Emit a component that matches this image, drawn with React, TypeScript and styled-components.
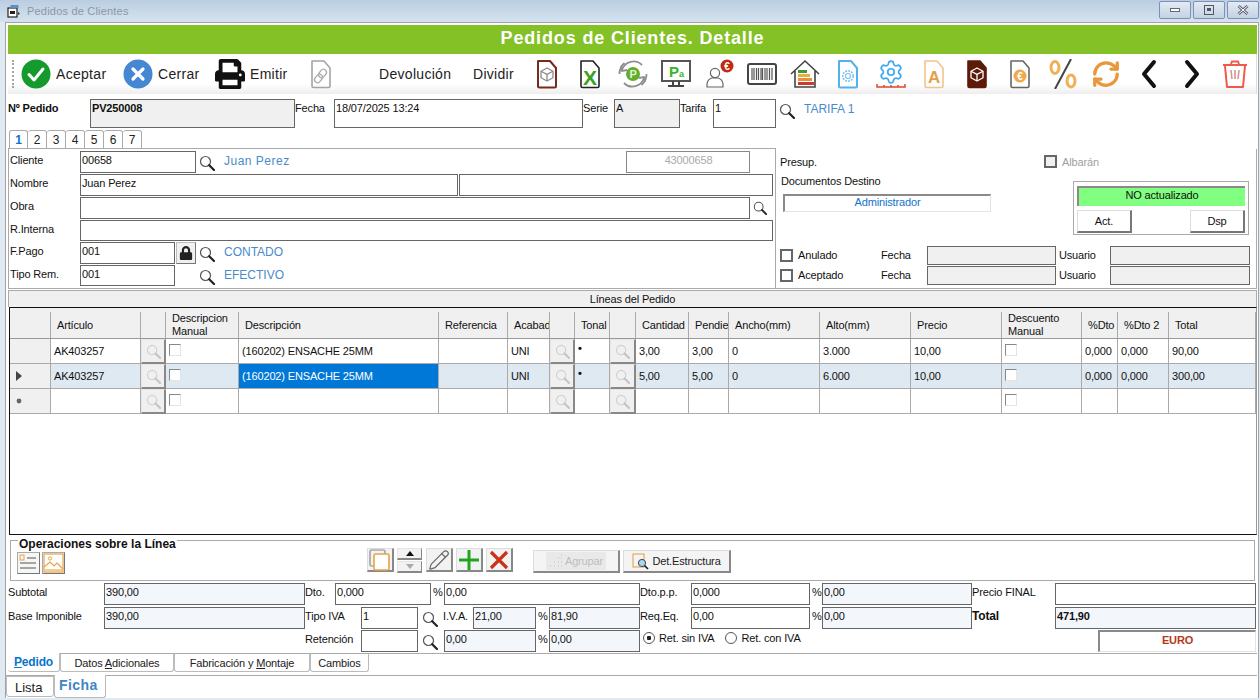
import React from 'react'
import styled, { createGlobalStyle } from 'styled-components'
import { Pencil, RefreshCw, Settings } from 'lucide-react'
import { FaLock, FaPrint } from 'react-icons/fa'

const GlobalStyle = createGlobalStyle`
  html, body {
    margin: 0;
    padding: 0;
    background: #dfeaf3;
  }
  body {
    font-family: "Liberation Sans", Arial, sans-serif;
    font-size: 11px;
    letter-spacing: -0.15px;
    color: #111;
    overflow: hidden;
  }
  * {
    box-sizing: border-box;
  }
`

const Page = styled.div`
  width: 1260px;
  height: 700px;
  display: flex;
  flex-direction: column;
  background: #dfeaf3;
`

const TitleBar = styled.div`
  height: 22px;
  display: flex;
  align-items: center;
  padding-left: 7px;
  background: linear-gradient(#bacde0, #d5e3f0);
  color: #8c97a3;
  font-size: 11px;
`

const TitleText = styled.span`
  margin-left: 6px;
  letter-spacing: 0.2px;
`

const WindowButtons = styled.div`
  margin-left: auto;
  margin-right: 1px;
  display: flex;
  gap: 2px;
  align-self: flex-start;
  padding-top: 1px;
`

const WindowButton = styled.div`
  width: 32px;
  height: 18px;
  border: 1px solid #7f8fb5;
  border-radius: 2px;
  background: linear-gradient(#e3ebf4, #c3d2e3);
  display: flex;
  align-items: center;
  justify-content: center;
  color: #555;
`

const Frame = styled.div`
  width: 1254px;
  height: 676px;
  margin-left: 5px;
  padding: 2px 1px 0 2px;
  border: 1px solid #a3a3a3;
  border-bottom: none;
  background: #fff;
`

const GreenBar = styled.div`
  height: 29px;
  background: #84c126;
  color: #fff;
  font-size: 18px;
  font-weight: bold;
  letter-spacing: 0.85px;
  text-align: center;
  line-height: 27px;
`

const Toolbar = styled.div`
  height: 40px;
  display: flex;
  align-items: center;
  background: linear-gradient(#ffffff 75%, #eeeeee);
  border-right: 1px solid #ddd;
`

const Grip = styled.div`
  width: 2px;
  height: 28px;
  margin-left: 4px;
  border-left: 2px dotted #a5a5a5;
`

const ToolAction = styled.div<{ $ml: number }>`
  display: flex;
  align-items: center;
  gap: 5px;
  margin-left: ${(p) => p.$ml}px;
`

const ToolText = styled.span<{ $w: number; $ml?: number }>`
  width: ${(p) => p.$w}px;
  margin-left: ${(p) => p.$ml ?? 0}px;
  font-size: 14px;
  letter-spacing: 0.3px;
  color: #222;
  white-space: nowrap;
`

const IconStrip = styled.div`
  margin-left: auto;
  display: flex;
`

const IconSlot = styled.div`
  width: 43px;
  height: 40px;
  display: flex;
  align-items: center;
  justify-content: center;
`

const HeadRow = styled.div`
  height: 29px;
  margin-top: 5px;
  display: flex;
  align-items: flex-start;
`

const Label = styled.span<{ $w: number; $bold?: boolean; $large?: boolean }>`
  flex: none;
  width: ${(p) => p.$w}px;
  padding-top: 2px;
  font-size: ${(p) => (p.$large ? 12 : 11)}px;
  font-weight: ${(p) => (p.$bold ? 'bold' : 'normal')};
  line-height: 14px;
  white-space: nowrap;
`

const Field = styled.div<{ $w: number; $h?: number; $fill?: string; $bold?: boolean; $ml?: number }>`
  flex: none;
  width: ${(p) => p.$w}px;
  height: ${(p) => p.$h ?? 22}px;
  margin-left: ${(p) => p.$ml ?? 0}px;
  padding-left: 1px;
  border: 1px solid #666;
  background: ${(p) => p.$fill ?? '#fff'};
  font-weight: ${(p) => (p.$bold ? 'bold' : 'normal')};
  line-height: 17px;
  white-space: nowrap;
  overflow: hidden;
`

const CodeField = styled(Field)`
  margin-left: auto;
  margin-right: 25px;
  border-color: #888;
  color: #aaa;
  text-align: center;
`

const BlueText = styled.span<{ $ml: number; $spaced?: boolean }>`
  margin-left: ${(p) => p.$ml}px;
  padding-top: 3px;
  color: #4a8bcb;
  font-size: 12px;
  line-height: 14px;
  letter-spacing: ${(p) => (p.$spaced ? '0.5px' : '0')};
`

const SearchSlot = styled.span<{ $ml: number; $w?: number }>`
  flex: none;
  width: ${(p) => p.$w ?? 16}px;
  margin-left: ${(p) => p.$ml}px;
  padding-top: 4px;
  display: flex;
`

const PageTabs = styled.div`
  height: 20px;
  margin-top: 1px;
  padding-left: 1px;
  display: flex;
  align-items: flex-end;
`

const PageTab = styled.div<{ $active?: boolean }>`
  width: 19px;
  height: 19px;
  border: 1px solid #aaa;
  border-bottom: ${(p) => (p.$active ? 'none' : '1px solid #aaa')};
  border-left: ${(p) => (p.$active ? '1px solid #aaa' : 'none')};
  border-radius: 3px 3px 0 0;
  text-align: center;
  font-size: 12px;
  line-height: 18px;
  font-weight: ${(p) => (p.$active ? 'bold' : 'normal')};
  color: ${(p) => (p.$active ? '#0a74c8' : '#222')};
`

const Panels = styled.div`
  height: 140px;
  display: flex;
`

const LeftPanel = styled.div`
  width: 768px;
  padding: 3px 0 0 1px;
  border: 1px solid #aaa;
  border-top: none;
  margin-top: -1px;
  height: 141px;
  box-shadow: inset 0 1px 0 #aaa;
`

const FormRow = styled.div<{ $h?: number }>`
  height: ${(p) => p.$h ?? 23}px;
  display: flex;
  align-items: flex-start;
`

const LockButton = styled.div`
  flex: none;
  width: 20px;
  height: 22px;
  margin-left: 1px;
  border: 1px solid #bbb;
  border-right-color: #777;
  border-bottom-color: #777;
  background: #f0f0f0;
  display: flex;
  align-items: center;
  justify-content: center;
  color: #222;
`

const RightPanel = styled.div`
  flex: 1;
  padding-left: 4px;
  border-right: 1px solid #aaa;
  border-bottom: 1px solid #aaa;
  display: flex;
  flex-direction: column;
`

const PresupRow = styled.div`
  height: 25px;
  display: flex;
  align-items: center;
`

const PresupLabel = styled.span`
  width: 264px;
  padding-top: 1px;
`

const CheckLabel = styled.label<{ $w?: number; $muted?: boolean }>`
  flex: none;
  width: ${(p) => (p.$w ? `${p.$w}px` : 'auto')};
  display: flex;
  align-items: center;
  gap: 5px;
  color: ${(p) => (p.$muted ? '#a0a0a0' : '#111')};
`

const SquareCheck = styled.span<{ $fill?: string }>`
  width: 13px;
  height: 13px;
  border: 2px solid #666;
  background: ${(p) => p.$fill ?? '#fff'};
`

const MiddleBlock = styled.div`
  height: 71px;
  padding-right: 7px;
  display: flex;
  justify-content: space-between;
`

const DocsColumn = styled.div`
  margin-left: 1px;
  display: flex;
  flex-direction: column;
`

const DocsTitle = styled.span`
  line-height: 14px;
`

const SunkenBox = styled.div<{ $w: number; $color: string; $bold?: boolean; $ml?: number; $mt?: number }>`
  flex: none;
  width: ${(p) => p.$w}px;
  height: ${(p) => (p.$bold ? 22 : 18)}px;
  margin-left: ${(p) => p.$ml ?? 0}px;
  margin-top: ${(p) => p.$mt ?? 0}px;
  border: 1px solid #e3e3e3;
  border-top: 2px solid #8a8a8a;
  border-left: 2px solid #8a8a8a;
  color: ${(p) => p.$color};
  font-weight: ${(p) => (p.$bold ? 'bold' : 'normal')};
  text-align: center;
  line-height: ${(p) => (p.$bold ? 16 : 13)}px;
`

const StatusBox = styled.div`
  width: 176px;
  height: 54px;
  margin-top: 7px;
  padding: 4px 3px;
  border: 1px solid #aaa;
`

const StatusBanner = styled.div`
  height: 20px;
  border-top: 2px solid #8a8a8a;
  border-left: 2px solid #8a8a8a;
  background: #80ff80;
  text-align: center;
  line-height: 15px;
`

const StatusButtons = styled.div`
  margin-top: 4px;
  display: flex;
  justify-content: space-between;
`

const StatusButton = styled.div`
  width: 55px;
  height: 23px;
  border: 1px solid #ddd;
  border-right: 2px solid #777;
  border-bottom: 2px solid #777;
  background: #fff;
  text-align: center;
  line-height: 20px;
`

const AuditRow = styled.div`
  height: 20px;
  display: flex;
  align-items: center;
`

const AuditLabel = styled.span<{ $w: number }>`
  width: ${(p) => p.$w}px;
  line-height: 19px;
`

const GridTitle = styled.div`
  height: 17px;
  margin-top: 1px;
  border: 1px solid #aaa;
  border-bottom: none;
  background: #f0f0f0;
  text-align: center;
  line-height: 16px;
`

const Grid = styled.div`
  height: 228px;
  margin-left: 1px;
  border: 1px solid #111;
  border-right-color: #999;
  background: #fff;
`

const COLUMNS = '41px 90px 25px 73px 200px 69px 42px 25px 35px 26px 53px 40px 91px 91px 91px 80px 36px 51px 87px'

const HeaderRow = styled.div`
  height: 31px;
  padding-top: 4px;
  display: grid;
  grid-template-columns: ${COLUMNS};
  background: #f0f0f0;
  border-bottom: 1px solid #999;
`

const HeaderCell = styled.div`
  padding-left: 6px;
  display: flex;
  align-items: center;
  border-right: 1px solid #aaa;
  line-height: 13px;
  overflow: hidden;
  white-space: pre;
`

const DataRow = styled.div<{ $selected?: boolean }>`
  height: 25px;
  display: grid;
  grid-template-columns: ${COLUMNS};
  background: ${(p) => (p.$selected ? '#dfe9f1' : '#fff')};
`

const Cell = styled.div<{ $highlight?: boolean }>`
  padding-left: 3px;
  display: flex;
  align-items: center;
  border-right: 1px solid #aaa;
  border-bottom: 1px solid #aaa;
  background: ${(p) => (p.$highlight ? '#0078d7' : 'transparent')};
  color: ${(p) => (p.$highlight ? '#fff' : '#111')};
  white-space: nowrap;
  overflow: hidden;
`

const RowHead = styled(Cell)`
  padding-left: 0;
  justify-content: flex-start;
  background: #f0f0f0;
`

const RowMarker = styled.span`
  margin-left: 6px;
  width: 6px;
  display: flex;
  justify-content: center;
`

const CheckCell = styled(Cell)`
  align-items: flex-start;
  padding-top: 5px;
`

const GridCheck = styled.span`
  width: 12px;
  height: 12px;
  border: 1px solid #e4e4e4;
  border-top-color: #888;
  border-left-color: #888;
  background: #fff;
`

const DotCell = styled(Cell)`
  align-items: flex-start;
  padding-top: 3px;
  font-size: 11px;
  font-weight: bold;
`

const ButtonCell = styled.div`
  border-right: 2px solid #888;
  border-bottom: 2px solid #888;
  border-top: 1px solid #e6e6e6;
  border-left: 1px solid #e6e6e6;
  background: #f0f0f0;
  display: flex;
  align-items: center;
  justify-content: center;
`

const GroupBox = styled.div`
  position: relative;
  height: 41px;
  margin: 5px 2px 0;
  padding: 7px 0 0 6px;
  border: 1px solid #aaa;
  display: flex;
  align-items: flex-start;
`

const GroupTitle = styled.span`
  position: absolute;
  top: -3px;
  left: 7px;
  padding: 0 1px;
  background: #fff;
  font-size: 12px;
  font-weight: bold;
  letter-spacing: 0;
  line-height: 13px;
`

const PictureButtons = styled.div`
  width: 350px;
  margin-top: 4px;
  display: flex;
  gap: 2px;
`

const FlatButton = styled.div`
  width: 23px;
  height: 22px;
  border: 1px solid #aaa;
  border-right-color: #777;
  border-bottom-color: #777;
  background: #f6f6f6;
  display: flex;
  align-items: center;
  justify-content: center;
`

const OpButton = styled.div`
  flex: none;
  width: 27px;
  height: 24px;
  margin-right: 3px;
  border: 1px solid #ddd;
  border-right: 2px solid #888;
  border-bottom: 2px solid #888;
  background: #f2f2f2;
  display: flex;
  align-items: center;
  justify-content: center;
`

const SpinColumn = styled.div`
  flex: none;
  width: 25px;
  margin-right: 4px;
  display: flex;
  flex-direction: column;
  gap: 1px;
`

const SpinButton = styled.div`
  height: 12px;
  border-right: 1px solid #888;
  border-bottom: 2px solid #888;
  border-top: 1px solid #e5e5e5;
  border-left: 1px solid #e5e5e5;
  background: #f2f2f2;
  display: flex;
  align-items: center;
  justify-content: center;
`

const TextButton = styled.div<{ $w: number; $ml: number }>`
  flex: none;
  width: ${(p) => p.$w}px;
  height: 23px;
  margin-top: 2px;
  margin-left: ${(p) => p.$ml}px;
  border: 1px solid #ddd;
  border-right: 2px solid #888;
  border-bottom: 2px solid #888;
  background: #f4f4f4;
  display: flex;
  align-items: center;
  justify-content: center;
  gap: 3px;
  color: #222;
`

const DisabledCaption = styled.span`
  display: flex;
  align-items: center;
  gap: 2px;
  padding: 2px 3px;
  background: #e9e9e9;
  color: #bdbdbd;
`

const Totals = styled.div`
  margin-top: 2px;
`

const Pct = styled.span<{ $w: number }>`
  flex: none;
  width: ${(p) => p.$w}px;
  padding: 2px 0 0 2px;
  line-height: 14px;
`

const RadioGroup = styled.div`
  width: 458px;
  padding: 2px 0 0 3px;
  display: flex;
  gap: 11px;
`

const RadioOption = styled.label`
  display: flex;
  align-items: center;
  gap: 4px;
`

const Radio = styled.span<{ $on?: boolean }>`
  width: 12px;
  height: 12px;
  border: 1.5px solid #555;
  border-radius: 50%;
  background: ${(p) => (p.$on ? 'radial-gradient(circle, #222 0 2px, #fff 2.5px)' : '#fff')};
`

const DocTabs = styled.div`
  height: 22px;
  border-top: 1px solid #aaa;
  display: flex;
  align-items: flex-start;
`

const DocTab = styled.div<{ $w: number; $active?: boolean }>`
  width: ${(p) => p.$w}px;
  height: 19px;
  margin-top: -1px;
  border: 1px solid #bbb;
  border-left: ${(p) => (p.$active ? 'none' : '1px solid #bbb')};
  border-top: ${(p) => (p.$active ? 'none' : '1px solid #aaa')};
  border-radius: 0 0 3px 3px;
  text-align: center;
  line-height: 18px;
  background: #fff;
  font-size: ${(p) => (p.$active ? 12 : 11)}px;
  font-weight: ${(p) => (p.$active ? 'bold' : 'normal')};
  color: ${(p) => (p.$active ? '#0a74c8' : '#222')};

  u {
    text-decoration: underline;
  }
`

const ViewTabs = styled.div`
  margin-left: -2px;
  height: 23px;
  border-top: 1px solid #aaa;
  display: flex;
  align-items: flex-start;
`

const ViewTab = styled.div<{ $w: number; $active?: boolean }>`
  width: ${(p) => p.$w}px;
  height: ${(p) => (p.$active ? 23 : 21)}px;
  margin-top: ${(p) => (p.$active ? -1 : 0)}px;
  border: 1px solid #bbb;
  border-top: ${(p) => (p.$active ? 'none' : '1px solid #bbb')};
  border-radius: 0 0 3px 3px;
  background: #fff;
  padding-left: ${(p) => (p.$active ? 4 : 8)}px;
  font-size: ${(p) => (p.$active ? 14 : 13)}px;
  line-height: 21px;
  font-weight: ${(p) => (p.$active ? 'bold' : 'normal')};
  color: ${(p) => (p.$active ? '#3f86c6' : '#222')};
  letter-spacing: ${(p) => (p.$active ? '0.4px' : '0')};
`

const Magnifier = ({ size = 16, pale = false }: { size?: number; pale?: boolean }) => (
  <svg width={size} height={size} viewBox="0 0 16 16">
    <circle cx="6.5" cy="6.5" r="5" fill="none" stroke={pale ? '#d0d0d0' : '#555'} strokeWidth="1.2" />
    <line x1="10.2" y1="10.2" x2="15" y2="15" stroke={pale ? '#c4c4c4' : '#222'} strokeWidth="2.2" strokeLinecap="round" />
  </svg>
)

const DocShape = ({ stroke, fill = 'none', width = 1.6 }: { stroke: string; fill?: string; width?: number }) => (
  <path d="M6 2h12l6 7v18a1.5 1.5 0 0 1-1.5 1.5h-15A1.5 1.5 0 0 1 6 27z" fill={fill} stroke={stroke} strokeWidth={width} strokeLinejoin="round" />
)

const Cube = ({ stroke }: { stroke: string }) => (
  <g fill="none" stroke={stroke} strokeWidth="1.3" strokeLinejoin="round">
    <path d="M15 9l6 3.2v6.6L15 22l-6-3.2v-6.6z" />
    <path d="M9 12.2l6 3.2 6-3.2M15 15.4V22" />
  </g>
)

const IconText = styled.text<{ $size: number; $color: string }>`
  font-family: "Liberation Sans", Arial, sans-serif;
  font-size: ${(p) => p.$size}px;
  font-weight: bold;
  fill: ${(p) => p.$color};
  text-anchor: middle;
`

const Icon30 = ({ children }: { children: React.ReactNode }) => (
  <svg width="30" height="30" viewBox="0 0 30 30">
    {children}
  </svg>
)

const CheckIcon = () => (
  <Icon30>
    <circle cx="15" cy="15" r="14.5" fill="#159a2d" />
    <path d="M8 15.5l5 5.5 9-11" fill="none" stroke="#fff" strokeWidth="3" strokeLinecap="round" strokeLinejoin="round" />
  </Icon30>
)

const CloseIcon = () => (
  <Icon30>
    <circle cx="15" cy="15" r="14.5" fill="#4587d2" />
    <path d="M10 10l10 10M20 10L10 20" fill="none" stroke="#fff" strokeWidth="3.2" strokeLinecap="round" />
  </Icon30>
)

const LinkDocIcon = () => (
  <Icon30>
    <DocShape stroke="#a8a3a3" />
    <g fill="none" stroke="#b0abab" strokeWidth="1.3">
      <rect x="13.5" y="10" width="6" height="9" rx="3" transform="rotate(40 16.5 14.5)" />
      <rect x="9.5" y="15" width="6" height="9" rx="3" transform="rotate(40 12.5 19.5)" />
    </g>
  </Icon30>
)

const BoxDocIcon = () => (
  <Icon30>
    <DocShape stroke="#7a2a1c" width={2} />
    <Cube stroke="#8d8d8d" />
  </Icon30>
)

const ExcelIcon = () => (
  <Icon30>
    <DocShape stroke="#222" />
    <IconText x="15" y="26" $size={21} $color="#35a31b">X</IconText>
  </Icon30>
)

const RefreshPIcon = () => (
  <Icon30>
    <g fill="none" stroke="#8f8f8f" strokeWidth="1.8">
      <path d="M4 11a12 12 0 0 1 20-5" />
      <path d="M3 7l1 5 5-1" />
      <path d="M26 19a12 12 0 0 1-20 5" />
      <path d="M27 23l-1-5-5 1" />
      <path d="M1.5 15a14 14 0 0 1 5-11M28.5 15a14 14 0 0 1-5 11" />
    </g>
    <circle cx="15" cy="15" r="7" fill="#62ad2e" />
    <IconText x="15" y="19" $size={11} $color="#dff3cf">P</IconText>
  </Icon30>
)

const MonitorIcon = () => (
  <Icon30>
    <rect x="1" y="2" width="28" height="20" fill="#fff" stroke="#555" strokeWidth="2" />
    <IconText x="13" y="18" $size={15} $color="#38b52a">P</IconText>
    <IconText x="20.5" y="18" $size={9} $color="#38b52a">a</IconText>
    <path d="M12 22v4M18 22v4M7 27h16" stroke="#444" strokeWidth="2" fill="none" />
  </Icon30>
)

const PersonEuroIcon = () => (
  <Icon30>
    <circle cx="11" cy="14" r="4.6" fill="none" stroke="#666" strokeWidth="1.2" />
    <path d="M3 28v-3a7 7 0 0 1 5-6h6a7 7 0 0 1 5 6v3z" fill="none" stroke="#666" strokeWidth="1.2" />
    <circle cx="23" cy="7" r="6.5" fill="#c02a12" />
    <IconText x="23" y="10.5" $size={10} $color="#fff">€</IconText>
  </Icon30>
)

const BarcodeIcon = () => (
  <Icon30>
    <rect x="1" y="5" width="28" height="20" rx="2" fill="none" stroke="#444" strokeWidth="2" />
    <path
      d="M5 9v12M7 9v12M9.5 9v12M11.5 9v12M14 9v12M15.5 9v12M18 9v12M20 9v12M22.5 9v12M25 9v12"
      stroke="#555"
      strokeWidth="1.2"
    />
  </Icon30>
)

const HouseIcon = () => (
  <Icon30>
    <path d="M1 15L15 2l14 13M5 12v16h20V12" fill="none" stroke="#444" strokeWidth="1.6" />
    <rect x="8" y="11" width="9" height="3" fill="#3f9a3c" />
    <rect x="8" y="15" width="12" height="3" fill="#e8b13a" />
    <rect x="8" y="19" width="14" height="3" fill="#e8913a" />
    <rect x="8" y="23" width="16" height="3" fill="#cf3b2b" />
  </Icon30>
)

const GearDocIcon = () => (
  <Icon30>
    <DocShape stroke="#55b1ee" width={2} />
    <circle cx="15" cy="17" r="5.2" fill="none" stroke="#7cc3f0" strokeWidth="1.6" strokeDasharray="2 1" />
    <circle cx="15" cy="17" r="2.5" fill="none" stroke="#7cc3f0" strokeWidth="1.2" />
  </Icon30>
)

const GearRulerIcon = () => (
  <svg width="30" height="30" viewBox="0 0 30 30">
    <svg x="2" y="0" width="26" height="26" viewBox="0 0 24 24">
      <Settings width="24" height="24" color="#3fa9ef" strokeWidth={1.6} />
    </svg>
    <path d="M1 25v3h28v-3M8 28v-2M15 28v-2M22 28v-2" fill="none" stroke="#dc4a2c" strokeWidth="1.5" />
  </svg>
)

const ADocIcon = () => (
  <Icon30>
    <DocShape stroke="#f0c48b" />
    <IconText x="15" y="24" $size={17} $color="#e6a048">A</IconText>
  </Icon30>
)

const DarkDocIcon = () => (
  <Icon30>
    <DocShape stroke="#5d1a06" fill="#5d1a06" />
    <Cube stroke="#fff" />
  </Icon30>
)

const EuroDocIcon = () => (
  <Icon30>
    <DocShape stroke="#666" />
    <circle cx="15" cy="17" r="6.5" fill="#f0a94e" />
    <IconText x="15" y="21" $size={10} $color="#fff">€</IconText>
  </Icon30>
)

const PercentIcon = () => (
  <Icon30>
    <ellipse cx="7" cy="8.5" rx="4" ry="6" fill="none" stroke="#f0b058" strokeWidth="3" />
    <ellipse cx="23" cy="22" rx="4" ry="6" fill="none" stroke="#f0b058" strokeWidth="3" />
    <path d="M23 0L7 30" stroke="#444" strokeWidth="2" />
  </Icon30>
)

const Chevron = ({ d }: { d: string }) => (
  <svg width="16" height="30" viewBox="0 0 16 30">
    <path d={d} fill="none" stroke="#111" strokeWidth="4" strokeLinecap="round" strokeLinejoin="round" />
  </svg>
)

const TrashIcon = () => (
  <Icon30>
    <path d="M3 6h24M11 5l1-2.5h6L19 5" fill="none" stroke="#ef5a4c" strokeWidth="2" />
    <path d="M5 7l2 21h16l2-21" fill="none" stroke="#ef5a4c" strokeWidth="2" strokeLinejoin="round" />
    <path d="M11 11l1 9M15 11v9M19 11l-1 9" fill="none" stroke="#d9958d" strokeWidth="1.6" />
  </Icon30>
)

const AppIcon = () => (
  <svg width="14" height="14" viewBox="0 0 14 14">
    <rect x="1" y="4" width="9" height="9" fill="#fff" stroke="#222" strokeWidth="1.2" />
    <rect x="3.5" y="1" width="8" height="3" fill="#5f8fbe" />
    <rect x="3" y="7" width="5" height="3" fill="#222" />
    <path d="M11 8l2 1.5-2 1.5z" fill="#333" />
  </svg>
)

const ListIcon = () => (
  <svg width="19" height="18" viewBox="0 0 19 18">
    <rect x="1" y="1" width="4" height="5" fill="none" stroke="#e8a34a" strokeWidth="1" />
    <path d="M8 4h9M1 9h16M1 14h16" stroke="#555" strokeWidth="1" />
  </svg>
)

const PictureIcon = () => (
  <svg width="21" height="20" viewBox="0 0 21 20">
    <rect x="1" y="1" width="19" height="18" fill="#fff" stroke="#e8a34a" strokeWidth="1.2" />
    <circle cx="7" cy="5.5" r="1.6" fill="none" stroke="#e8a34a" />
    <path d="M1 14l6-5 4 4 3-3 6 6" fill="none" stroke="#e8a34a" strokeWidth="1.2" />
    <rect x="2" y="16" width="17" height="2" fill="#f2cc90" />
  </svg>
)

const CopyIcon = () => (
  <svg width="22" height="22" viewBox="0 0 22 22">
    <rect x="1" y="1" width="15" height="16" rx="1.5" fill="none" stroke="#888" strokeWidth="1.2" />
    <rect x="5" y="5" width="15" height="16" rx="1.5" fill="#fff" stroke="#e8a34a" strokeWidth="1.6" />
  </svg>
)

const PlusIcon = () => (
  <svg width="22" height="22" viewBox="0 0 22 22">
    <path d="M11 1v20M1 11h20" stroke="#1fa51f" strokeWidth="3" />
  </svg>
)

const CrossIcon = () => (
  <svg width="20" height="20" viewBox="0 0 20 20">
    <path d="M2 2l16 16M18 2L2 18" stroke="#c8341a" strokeWidth="3.2" />
  </svg>
)

const DotsIcon = () => (
  <svg width="14" height="14" viewBox="0 0 14 14">
    <path d="M1 12h1M5 12h1M5 8h1M9 12h1M9 8h1M9 4h1M12 12h1M12 8h1M12 4h1M12 1h1" stroke="#c2c2c2" strokeWidth="1" />
  </svg>
)

const DetailIcon = () => (
  <svg width="17" height="17" viewBox="0 0 17 17">
    <rect x="1" y="1" width="11" height="13" fill="none" stroke="#e8a34a" strokeWidth="1.1" />
    <circle cx="10" cy="10" r="3.6" fill="#a7d8f2" stroke="#444" strokeWidth="1" />
    <path d="M12.6 12.6L16 16" stroke="#222" strokeWidth="1.6" />
  </svg>
)

const Triangle = ({ up = false, color = '#111' }: { up?: boolean; color?: string }) => (
  <svg width="8" height="5" viewBox="0 0 8 5">
    <path d={up ? 'M0 5L4 0l4 5z' : 'M0 0l4 5 4-5z'} fill={color} />
  </svg>
)

interface Line {
  articulo: string
  descripcion: string
  acabado: string
  tonal: string
  cantidad: string
  pendiente: string
  ancho: string
  alto: string
  precio: string
  dto: string
  dto2: string
  total: string
  marker: 'none' | 'current' | 'new'
}

const emptyLine: Line = {
  articulo: '',
  descripcion: '',
  acabado: '',
  tonal: '',
  cantidad: '',
  pendiente: '',
  ancho: '',
  alto: '',
  precio: '',
  dto: '',
  dto2: '',
  total: '',
  marker: 'new',
}

const lines: Line[] = [
  {
    articulo: 'AK403257',
    descripcion: '(160202) ENSACHE 25MM',
    acabado: 'UNI',
    tonal: '•',
    cantidad: '3,00',
    pendiente: '3,00',
    ancho: '0',
    alto: '3.000',
    precio: '10,00',
    dto: '0,000',
    dto2: '0,000',
    total: '90,00',
    marker: 'none',
  },
  {
    articulo: 'AK403257',
    descripcion: '(160202) ENSACHE 25MM',
    acabado: 'UNI',
    tonal: '•',
    cantidad: '5,00',
    pendiente: '5,00',
    ancho: '0',
    alto: '6.000',
    precio: '10,00',
    dto: '0,000',
    dto2: '0,000',
    total: '300,00',
    marker: 'current',
  },
  emptyLine,
]

// the narrow columns show their captions cut short, as in the grid of the program
const headers = [
  '',
  'Artículo',
  '',
  'Descripcion\nManual',
  'Descripción',
  'Referencia',
  'Acabad',
  '',
  'Tonal',
  '',
  'Cantidad',
  'Pendie',
  'Ancho(mm)',
  'Alto(mm)',
  'Precio',
  'Descuento\nManual',
  '%Dto',
  '%Dto 2',
  'Total',
]

const GridSearch = () => (
  <ButtonCell>
    <Magnifier size={15} pale />
  </ButtonCell>
)

const LineRow = ({ line }: { line: Line }) => {
  const selected = line.marker === 'current'
  return (
    <DataRow $selected={selected}>
      <RowHead>
        <RowMarker>
          {line.marker === 'current' && (
            <svg width="6" height="10" viewBox="0 0 6 10">
              <path d="M0 0l6 5-6 5z" fill="#444" />
            </svg>
          )}
          {line.marker === 'new' && (
            <svg width="6" height="6" viewBox="0 0 6 6">
              <circle cx="3" cy="3" r="2.4" fill="#666" />
            </svg>
          )}
        </RowMarker>
      </RowHead>
      <Cell>{line.articulo}</Cell>
      <GridSearch />
      <CheckCell>
        <GridCheck />
      </CheckCell>
      <Cell $highlight={selected}>{line.descripcion}</Cell>
      <Cell />
      <Cell>{line.acabado}</Cell>
      <GridSearch />
      <DotCell>{line.tonal}</DotCell>
      <GridSearch />
      <Cell>{line.cantidad}</Cell>
      <Cell>{line.pendiente}</Cell>
      <Cell>{line.ancho}</Cell>
      <Cell>{line.alto}</Cell>
      <Cell>{line.precio}</Cell>
      <CheckCell>
        <GridCheck />
      </CheckCell>
      <Cell>{line.dto}</Cell>
      <Cell>{line.dto2}</Cell>
      <Cell>{line.total}</Cell>
    </DataRow>
  )
}

const FILL = '#f3f6fb'
const GRAY = '#f0f0f0'

const App = () => {
  return (
    <Page>
      <GlobalStyle />
      <TitleBar>
        <AppIcon />
        <TitleText>Pedidos de Clientes</TitleText>
        <WindowButtons>
          <WindowButton>
            <svg width="10" height="4" viewBox="0 0 10 4">
              <rect x="0.5" y="0.5" width="9" height="3" fill="#fff" stroke="#667" />
            </svg>
          </WindowButton>
          <WindowButton>
            <svg width="10" height="10" viewBox="0 0 10 10">
              <rect x="0.5" y="0.5" width="9" height="9" fill="none" stroke="#556" />
              <rect x="3" y="3" width="4" height="3" fill="#556" />
            </svg>
          </WindowButton>
          <WindowButton>
            <svg width="12" height="10" viewBox="0 0 12 10">
              <path d="M1.5 1l9 8M10.5 1l-9 8" stroke="#667" strokeWidth="3" />
              <path d="M1.5 1l9 8M10.5 1l-9 8" stroke="#fff" strokeWidth="1" />
            </svg>
          </WindowButton>
        </WindowButtons>
      </TitleBar>
      <Frame>
        <GreenBar>Pedidos de Clientes. Detalle</GreenBar>
        <Toolbar>
          <Grip />
          <ToolAction $ml={7}>
            <CheckIcon />
            <ToolText $w={50}>Aceptar</ToolText>
          </ToolAction>
          <ToolAction $ml={17}>
            <CloseIcon />
            <ToolText $w={40}>Cerrar</ToolText>
          </ToolAction>
          <ToolAction $ml={17}>
            <FaPrint size={30} color="#111" />
            <ToolText $w={38}>Emitir</ToolText>
          </ToolAction>
          <ToolAction $ml={18}>
            <LinkDocIcon />
          </ToolAction>
          <ToolText $w={72} $ml={43}>
            Devolución
          </ToolText>
          <ToolText $w={44} $ml={22}>
            Dividir
          </ToolText>
          <IconStrip>
            <IconSlot><BoxDocIcon /></IconSlot>
            <IconSlot><ExcelIcon /></IconSlot>
            <IconSlot><RefreshPIcon /></IconSlot>
            <IconSlot><MonitorIcon /></IconSlot>
            <IconSlot><PersonEuroIcon /></IconSlot>
            <IconSlot><BarcodeIcon /></IconSlot>
            <IconSlot><HouseIcon /></IconSlot>
            <IconSlot><GearDocIcon /></IconSlot>
            <IconSlot><GearRulerIcon /></IconSlot>
            <IconSlot><ADocIcon /></IconSlot>
            <IconSlot><DarkDocIcon /></IconSlot>
            <IconSlot><EuroDocIcon /></IconSlot>
            <IconSlot><PercentIcon /></IconSlot>
            <IconSlot><RefreshCw size={30} color="#e8973a" strokeWidth={2.6} /></IconSlot>
            <IconSlot><Chevron d="M13 3L3 15l10 12" /></IconSlot>
            <IconSlot><Chevron d="M3 3l10 12L3 27" /></IconSlot>
            <IconSlot><TrashIcon /></IconSlot>
          </IconStrip>
        </Toolbar>

        <HeadRow>
          <Label $w={82} $bold>Nº Pedido</Label>
          <Field $w={205} $h={29} $fill={GRAY} $bold>PV250008</Field>
          <Label $w={39}>Fecha</Label>
          <Field $w={249} $h={29}>18/07/2025 13:24</Field>
          <Label $w={31}> Serie</Label>
          <Field $w={66} $h={29} $fill={GRAY}>A</Field>
          <Label $w={33}> Tarifa</Label>
          <Field $w={63} $h={29}>1</Field>
          <SearchSlot $ml={3}><Magnifier /></SearchSlot>
          <BlueText $ml={9}>TARIFA 1</BlueText>
        </HeadRow>

        <PageTabs>
          {[1, 2, 3, 4, 5, 6, 7].map((n) => (
            <PageTab key={n} $active={n === 1}>{n}</PageTab>
          ))}
        </PageTabs>

        <Panels>
          <LeftPanel>
            <FormRow>
              <Label $w={70}>Cliente</Label>
              <Field $w={116}>00658</Field>
              <SearchSlot $ml={3}><Magnifier /></SearchSlot>
              <BlueText $ml={9} $spaced>Juan Perez</BlueText>
              <CodeField $w={124}>43000658</CodeField>
            </FormRow>
            <FormRow>
              <Label $w={70}>Nombre</Label>
              <Field $w={378}>Juan Perez</Field>
              <Field $w={314} $ml={1} />
            </FormRow>
            <FormRow>
              <Label $w={70}>Obra</Label>
              <Field $w={670} />
              <SearchSlot $ml={3}><Magnifier size={14} /></SearchSlot>
            </FormRow>
            <FormRow $h={22}>
              <Label $w={70}>R.Interna</Label>
              <Field $w={693} $h={21} />
            </FormRow>
            <FormRow>
              <Label $w={70}>F.Pago</Label>
              <Field $w={95}>001</Field>
              <LockButton><FaLock size={14} /></LockButton>
              <SearchSlot $ml={3}><Magnifier /></SearchSlot>
              <BlueText $ml={9}>CONTADO</BlueText>
            </FormRow>
            <FormRow>
              <Label $w={70}>Tipo Rem.</Label>
              <Field $w={95} $h={21}>001</Field>
              <SearchSlot $ml={24}><Magnifier /></SearchSlot>
              <BlueText $ml={9}>EFECTIVO</BlueText>
            </FormRow>
          </LeftPanel>

          <RightPanel>
            <PresupRow>
              <PresupLabel>Presup.</PresupLabel>
              <CheckLabel $muted>
                <SquareCheck $fill={GRAY} />
                Albarán
              </CheckLabel>
            </PresupRow>
            <MiddleBlock>
              <DocsColumn>
                <DocsTitle>Documentos Destino</DocsTitle>
                <SunkenBox $w={208} $color="#1273cc" $ml={2} $mt={6}>Administrador</SunkenBox>
              </DocsColumn>
              <StatusBox>
                <StatusBanner>NO actualizado</StatusBanner>
                <StatusButtons>
                  <StatusButton>Act.</StatusButton>
                  <StatusButton>Dsp</StatusButton>
                </StatusButtons>
              </StatusBox>
            </MiddleBlock>
            <AuditRow>
              <CheckLabel $w={101}>
                <SquareCheck />
                Anulado
              </CheckLabel>
              <AuditLabel $w={46}>Fecha</AuditLabel>
              <Field $w={129} $h={19} $fill={GRAY} />
              <AuditLabel $w={54}>&nbsp;Usuario</AuditLabel>
              <Field $w={140} $h={19} $fill={GRAY} />
            </AuditRow>
            <AuditRow>
              <CheckLabel $w={101}>
                <SquareCheck />
                Aceptado
              </CheckLabel>
              <AuditLabel $w={46}>Fecha</AuditLabel>
              <Field $w={129} $h={19} $fill={GRAY} />
              <AuditLabel $w={54}>&nbsp;Usuario</AuditLabel>
              <Field $w={140} $h={19} $fill={GRAY} />
            </AuditRow>
          </RightPanel>
        </Panels>

        <GridTitle>Líneas del Pedido</GridTitle>
        <Grid>
          <HeaderRow>
            {headers.map((h, i) => (
              <HeaderCell key={i}>{h}</HeaderCell>
            ))}
          </HeaderRow>
          {lines.map((line, i) => (
            <LineRow key={i} line={line} />
          ))}
        </Grid>

        <GroupBox>
          <GroupTitle>Operaciones sobre la Línea</GroupTitle>
          <PictureButtons>
            <FlatButton><ListIcon /></FlatButton>
            <FlatButton><PictureIcon /></FlatButton>
          </PictureButtons>
          <OpButton><CopyIcon /></OpButton>
          <SpinColumn>
            <SpinButton><Triangle up /></SpinButton>
            <SpinButton><Triangle color="#aaa" /></SpinButton>
          </SpinColumn>
          <OpButton><Pencil size={22} color="#666" strokeWidth={1.3} /></OpButton>
          <OpButton><PlusIcon /></OpButton>
          <OpButton><CrossIcon /></OpButton>
          <TextButton $w={87} $ml={17}>
            <DisabledCaption>
              <DotsIcon />
              Agrupar
            </DisabledCaption>
          </TextButton>
          <TextButton $w={108} $ml={3}>
            <DetailIcon />
            Det.Estructura
          </TextButton>
        </GroupBox>

        <Totals>
          <FormRow $h={24}>
            <Label $w={96}>Subtotal</Label>
            <Field $w={201} $fill={FILL}>390,00</Field>
            <Label $w={30}>Dto.</Label>
            <Field $w={96}>0,000</Field>
            <Pct $w={13}>%</Pct>
            <Field $w={196}>0,00</Field>
            <Label $w={51}>Dto.p.p.</Label>
            <Field $w={119}>0,000</Field>
            <Pct $w={12}>%</Pct>
            <Field $w={150} $fill={FILL}>0,00</Field>
            <Label $w={83}>Precio FINAL</Label>
            <Field $w={201} />
          </FormRow>
          <FormRow>
            <Label $w={96}>Base Imponible</Label>
            <Field $w={201} $fill={FILL}>390,00</Field>
            <Label $w={56}>Tipo IVA</Label>
            <Field $w={57}>1</Field>
            <SearchSlot $ml={4} $w={21}><Magnifier /></SearchSlot>
            <Label $w={30}>I.V.A.</Label>
            <Field $w={63} $fill={FILL}>21,00</Field>
            <Pct $w={13}>%</Pct>
            <Field $w={91} $fill={FILL}>81,90</Field>
            <Label $w={51}>Req.Eq.</Label>
            <Field $w={119}>0,00</Field>
            <Pct $w={12}>%</Pct>
            <Field $w={150} $fill={FILL}>0,00</Field>
            <Label $w={83} $bold $large>Total</Label>
            <Field $w={201} $fill={FILL} $bold>471,90</Field>
          </FormRow>
          <FormRow>
            <Label $w={297} />
            <Label $w={56}>Retención</Label>
            <Field $w={57} />
            <SearchSlot $ml={4} $w={22}><Magnifier /></SearchSlot>
            <Field $w={92} $fill={FILL}>0,00</Field>
            <Pct $w={13}>%</Pct>
            <Field $w={91} $fill={FILL}>0,00</Field>
            <RadioGroup>
              <RadioOption>
                <Radio $on />
                Ret. sin IVA
              </RadioOption>
              <RadioOption>
                <Radio />
                Ret. con IVA
              </RadioOption>
            </RadioGroup>
            <SunkenBox $w={158} $color="#b5381a" $bold>EURO</SunkenBox>
          </FormRow>
        </Totals>

        <DocTabs>
          <DocTab $w={52} $active><u>P</u>edido</DocTab>
          <DocTab $w={114}>Datos <u>A</u>dicionales</DocTab>
          <DocTab $w={136}>Fabricación y <u>M</u>ontaje</DocTab>
          <DocTab $w={59}>Cambios</DocTab>
        </DocTabs>
        <ViewTabs>
          <ViewTab $w={48}>Lista</ViewTab>
          <ViewTab $w={52} $active>Ficha</ViewTab>
        </ViewTabs>
      </Frame>
    </Page>
  )
}

export default App
